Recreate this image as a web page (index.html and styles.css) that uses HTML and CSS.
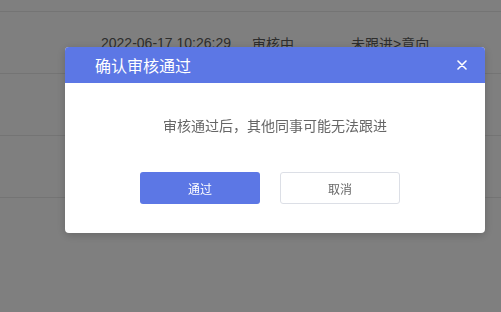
FILE: index.html
```html
<!DOCTYPE html>
<html lang="zh-CN">
<head>
    <meta charset="UTF-8">
    <meta name="viewport" content="width=device-width, initial-scale=1.0">
    <title>审核</title>
    <link rel="stylesheet" href="styles.css">
</head>
<body>
    <div class="table">
        <div class="row row-top"></div>
        <div class="row">
            <span class="cell cell-time">2022-06-17 10:26:29</span>
            <span class="cell cell-status">审核中</span>
            <span class="cell cell-stage">未跟进&gt;意向</span>
        </div>
        <div class="row"></div>
        <div class="row"></div>
    </div>

    <div class="mask">
        <div class="dialog">
            <div class="dialog-header">
                <span class="dialog-title">确认审核通过</span>
                <span class="dialog-close">
                    <svg width="10" height="10" viewBox="0 0 10 10">
                        <path d="M1 1 L9 9 M9 1 L1 9" stroke="#fff" stroke-width="1.6" stroke-linecap="round"/>
                    </svg>
                </span>
            </div>
            <div class="dialog-body">审核通过后，其他同事可能无法跟进</div>
            <div class="dialog-footer">
                <button class="btn btn-primary">通过</button>
                <button class="btn btn-default">取消</button>
            </div>
        </div>
    </div>
</body>
</html>
```

FILE: styles.css
```css
body { margin: 0; background: #fff; font-family: "Liberation Sans", "Noto Sans CJK SC", sans-serif; }
.table { width: 100%; }
.row { display: flex; align-items: center; height: 61px; border-bottom: 1px solid #e8e8e8; font-size: 14px; color: #5a5a5a; }
.row-top { height: 11px; }
.cell-time { margin-left: 101px; width: 151px; }
.cell-status { width: 99px; }
.mask { position: fixed; top: 0; left: 0; right: 0; bottom: 0; background: rgba(0, 0, 0, 0.5); padding: 47px 0 0 65px; }
.dialog { width: 420px; background: #fff; border-radius: 4px; overflow: hidden; box-shadow: 0 2px 10px rgba(0, 0, 0, 0.2); }
.dialog-header { height: 36px; background: #5c77e5; display: flex; align-items: center; justify-content: space-between; padding: 0 18px 0 30px; }
.dialog-title { color: #fff; font-size: 16px; }
.dialog-close { display: flex; width: 10px; height: 10px; }
.dialog-body { padding-top: 33px; height: 20px; line-height: 20px; text-align: center; font-size: 14px; color: #666; }
.dialog-footer { display: flex; justify-content: center; gap: 20px; padding: 36px 10px 29px 0; }
.btn { width: 120px; height: 32px; border-radius: 3px; font-size: 12px; font-family: inherit; cursor: pointer; }
.btn-primary { background: #5c77e5; color: #fff; border: none; }
.btn-default { background: #fff; color: #666; border: 1px solid #dcdfe6; }
```
